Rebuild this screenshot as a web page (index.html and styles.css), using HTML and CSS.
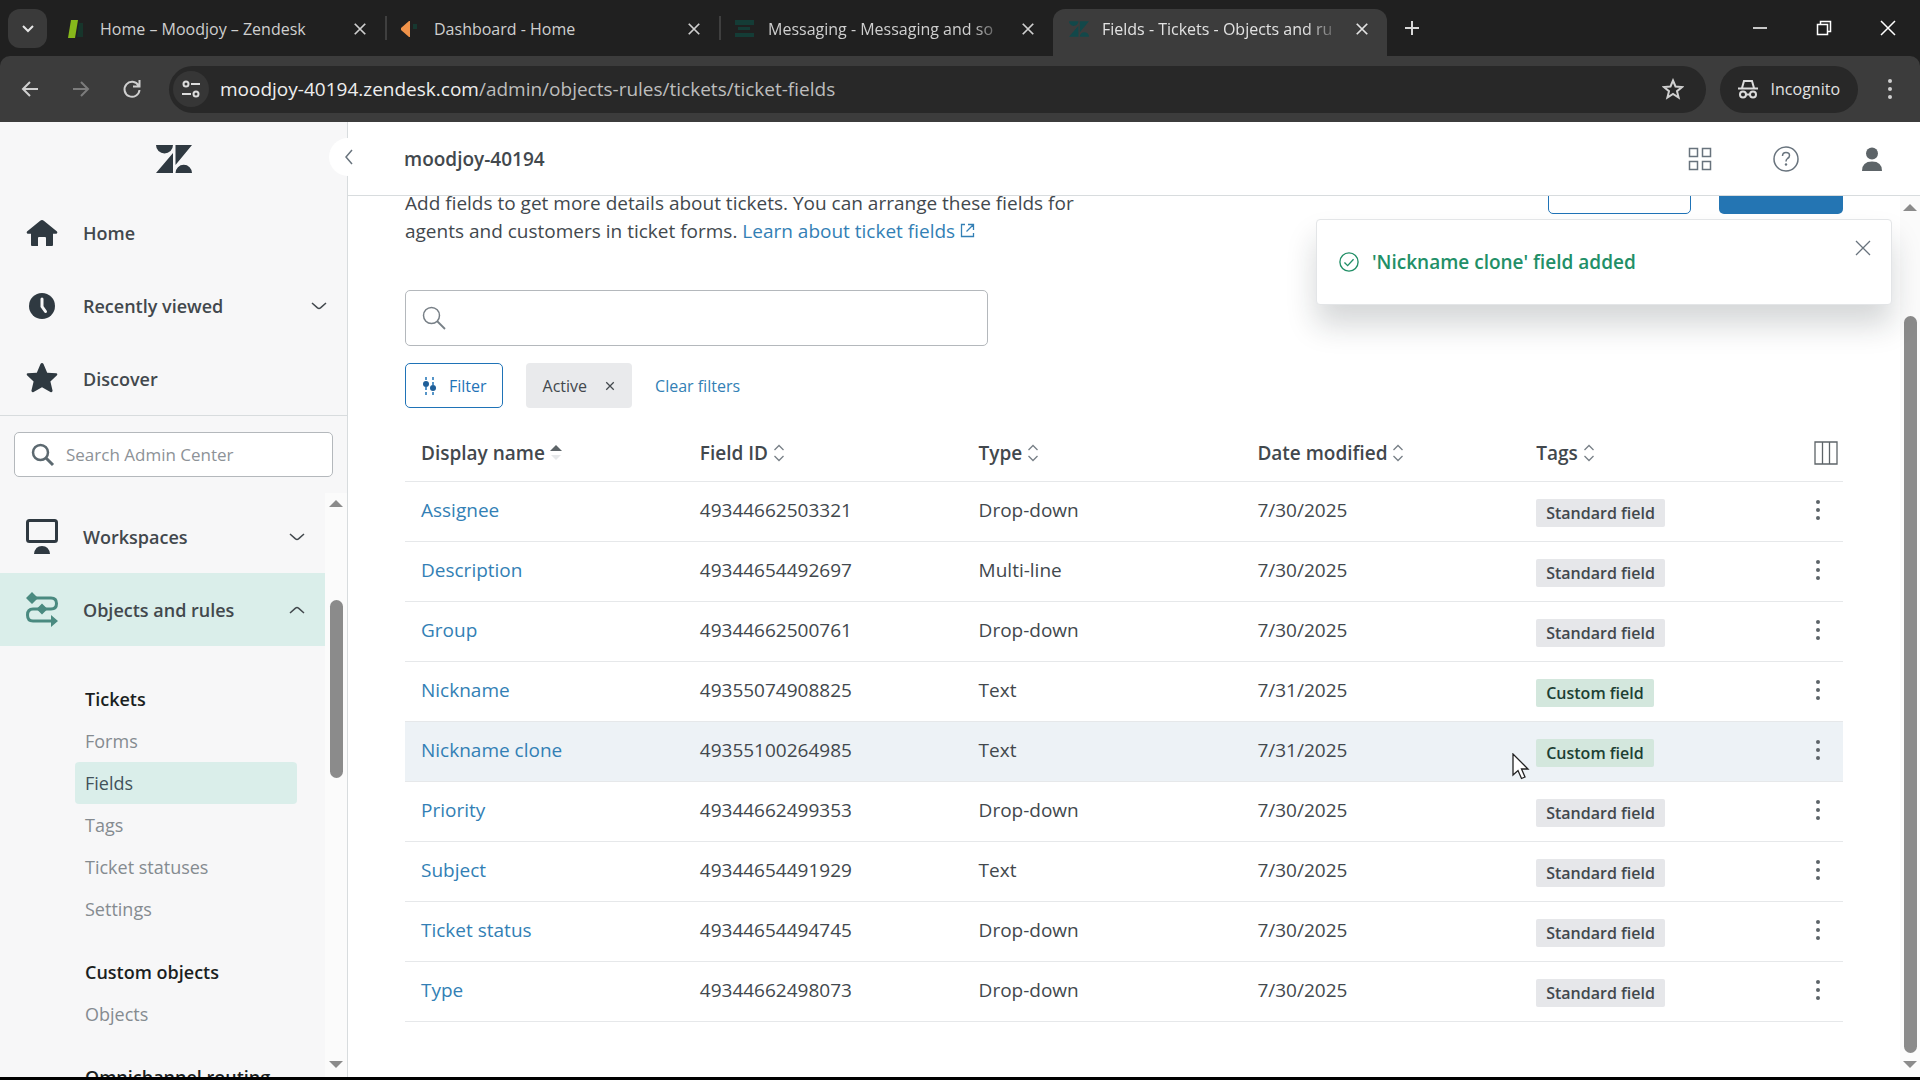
FILE: index.html
```html
<!DOCTYPE html>
<html lang="en">

<head>
  <meta charset="UTF-8">
  <meta name="viewport" content="width=device-width, initial-scale=1.0">
  <title>Fields - Tickets - Objects and rules</title>
  <link rel="stylesheet" href="styles.css">
</head>

<body>
  <!-- shared icons -->
  <svg class="sprite" aria-hidden="true">
    <symbol id="i-x" viewBox="0 0 16 16"><path d="M2 2l12 12M14 2L2 14" fill="none" stroke="currentColor" stroke-width="2"/></symbol>
    <symbol id="i-thin-x" viewBox="0 0 16 16"><path d="M1 1l14 14M15 1L1 15" fill="none" stroke="currentColor" stroke-width="1.3"/></symbol>
    <symbol id="i-down" viewBox="0 0 16 10"><path d="M1 2l5.500 4.800q1.500 1.200 3 0L15 2" fill="none" stroke="currentColor" stroke-width="1.500"/></symbol>
    <symbol id="i-dots" viewBox="0 0 6 22"><circle cx="3" cy="3" r="2"/><circle cx="3" cy="11" r="2"/><circle cx="3" cy="19" r="2"/></symbol>
    <symbol id="i-sort" viewBox="0 0 12 18"><path d="M1.500 6L6 1.500 10.500 6M1.500 12L6 16.500 10.500 12" fill="none" stroke="currentColor" stroke-width="1.300"/></symbol>
    <symbol id="i-zen" viewBox="0 0 36 28"><path d="M0 0h17a8.500 8.500 0 0 1-17 0zM17 8v20H0zM19.500 0H36L19.500 20zM19.500 28a8.250 8.250 0 0 1 16.500 0z"/></symbol>
  </svg>

  <header class="browser">
    <div class="tabs">
      <button class="tab-menu" aria-label="Search tabs"><svg width="14" height="9"><path d="M2 2l5 5 5-5" fill="none" stroke="#e6e6e6" stroke-width="2"/></svg></button>
      <div class="tab">
        <svg class="favicon" viewBox="0 0 20 20"><path d="M4 1h7L8 19H1z" fill="#86b81b"/><path d="M12 4h4v14h-6z" fill="#17352b"/></svg>
        <span class="tab-title">Home – Moodjoy – Zendesk</span>
        <button class="tab-close" aria-label="Close tab"><svg><use href="#i-x"/></svg></button>
      </div>
      <div class="tab divided">
        <svg class="favicon" viewBox="0 0 20 20"><path d="M8 2h1v16H8L0 11V9z" fill="#f0934a"/><path d="M12 5h4v5h-4z" fill="#173830"/></svg>
        <span class="tab-title">Dashboard - Home</span>
        <button class="tab-close" aria-label="Close tab"><svg><use href="#i-x"/></svg></button>
      </div>
      <div class="tab divided">
        <svg class="favicon" viewBox="0 0 20 20"><path d="M0 1h19v5H0zM3 8h12v3H3zM0 14h19v4H0z" fill="#143c36"/></svg>
        <span class="tab-title fade">Messaging - Messaging and so</span>
        <button class="tab-close" aria-label="Close tab"><svg><use href="#i-x"/></svg></button>
      </div>
      <div class="tab active">
        <svg class="favicon teal"><use href="#i-zen"/></svg>
        <span class="tab-title fade">Fields - Tickets - Objects and ru</span>
        <button class="tab-close" aria-label="Close tab"><svg><use href="#i-x"/></svg></button>
      </div>
      <button class="new-tab" aria-label="New tab"><svg width="16" height="16"><path d="M8 1v14M1 8h14" stroke="#d8d8d8" stroke-width="2"/></svg></button>
      <div class="win-btns">
        <button aria-label="Minimize"><svg width="16" height="16"><path d="M1 8h14" stroke="#fff" stroke-width="1.500"/></svg></button>
        <button aria-label="Restore"><svg width="16" height="16"><path d="M1.500 4.500h10v10h-10zM4.500 4V1.500h10v10H12" fill="none" stroke="#fff" stroke-width="1.500"/></svg></button>
        <button aria-label="Close"><svg width="16" height="16"><path d="M1 1l14 14M15 1L1 15" stroke="#fff" stroke-width="1.500"/></svg></button>
      </div>
    </div>

    <div class="toolbar">
      <div class="nav-btns">
        <button aria-label="Back"><svg width="20" height="20"><path d="M18 10H3M10 3l-7 7 7 7" fill="none" stroke="#d0d0d0" stroke-width="2"/></svg></button>
        <button aria-label="Forward"><svg width="20" height="20"><path d="M2 10h15M10 3l7 7-7 7" fill="none" stroke="#7c7c7c" stroke-width="2"/></svg></button>
        <button aria-label="Reload"><svg width="20" height="20"><path d="M16.500 6.500a7.500 7.500 0 1 0 1 4.500M17.500 1v6.500H11" fill="none" stroke="#d0d0d0" stroke-width="2"/></svg></button>
      </div>
      <div class="address">
        <button class="site-info" aria-label="Site information"><svg width="20" height="18"><g fill="none" stroke="#dcdcdc" stroke-width="2"><circle cx="5" cy="4" r="2.500"/><path d="M10 4h9M1 14h9"/><circle cx="15" cy="14" r="2.500"/></g></svg></button>
        <div class="url">moodjoy-40194.zendesk.com<span>/admin/objects-rules/tickets/ticket-fields</span></div>
        <button class="bookmark" aria-label="Bookmark"><svg width="22" height="22" viewBox="0 0 22 22"><path d="M11 2.500l2.500 6 6.500.500-5 4.200 1.600 6.300-5.600-3.500-5.600 3.500L7 13.200 2 9l6.500-.500z" fill="none" stroke="#d0d0d0" stroke-width="2"/></svg></button>
      </div>
      <div class="incognito">
        <svg width="20" height="20" fill="none" stroke="#dcdcdc" stroke-width="2"><path d="M0 9.500h20M4 9l2-7h8l2 7M8 15.500h4"/><circle cx="5" cy="15.500" r="3"/><circle cx="15" cy="15.500" r="3"/></svg>
        Incognito
      </div>
      <button class="menu" aria-label="Menu"><svg><use href="#i-dots"/></svg></button>
    </div>
  </header>

  <div class="app">
    <aside class="sidebar">
      <div class="brand"><svg width="36" height="28"><use href="#i-zen"/></svg></div>
      <button class="collapse" aria-label="Collapse navigation"><svg width="9" height="16"><path d="M8 1L2 8l6 7" fill="none" stroke="#68737d" stroke-width="1.500"/></svg></button>
      <nav class="top-nav">
        <a class="nav-item" href="#">
          <svg viewBox="0 0 32 32"><path d="M16 3q1 0 1.800.700L31 14.500q1 1.500-.500 2.200H27V28q0 1-1 1h-6v-8q0-1-1-1h-6q-1 0-1 1v8H6q-1 0-1-1V16.700H1.500Q0 16 1 14.500L14.200 3.700Q15 3 16 3z"/></svg>
          Home
        </a>
        <a class="nav-item" href="#">
          <svg viewBox="0 0 32 32"><circle cx="16" cy="16" r="13"/><path d="M16 9v7.500l3.500 5" fill="none" stroke="#f7f7f8" stroke-width="3" stroke-linecap="round"/></svg>
          Recently viewed
          <svg class="chev"><use href="#i-down"/></svg>
        </a>
        <a class="nav-item" href="#">
          <svg viewBox="0 0 32 32"><path d="M16 0q1 0 1.500 1l3.700 8.700 9.300.600q1.500.700.500 2l-6.600 6.200 2.200 9.300q-.300 2-2.200 1.200L16 24.200 7.600 29q-1.900.800-2.200-1.200l2.200-9.300L1 12.300q-1-1.300.500-2l9.300-.600L14.500 1Q15 0 16 0z"/></svg>
          Discover
        </a>
      </nav>
      <div class="side-search">
        <label class="side-box">
          <svg width="24" height="24"><circle cx="9.500" cy="9.500" r="7.500" fill="none" stroke="#5c6970" stroke-width="2.500"/><path d="M15 15l7 7" stroke="#5c6970" stroke-width="3"/></svg>
          <input type="text" placeholder="Search Admin Center" aria-label="Search Admin Center">
        </label>
      </div>
      <div class="side-scroll">
        <nav class="sections">
          <a class="nav-item" href="#">
            <svg viewBox="0 0 32 36"><rect x="1.500" y="1.500" width="29" height="21" rx="2" fill="none" stroke="#2f3941" stroke-width="3"/><path d="M8 35q1-8 8-8t8 8z"/></svg>
            Workspaces
            <svg class="chev"><use href="#i-down"/></svg>
          </a>
          <a class="nav-item selected" href="#">
            <svg viewBox="0 0 32 36"><path d="M6 6h19q5.500 0 5.500 5.500T25 17H7q-5.500 0-5.500 6T7 29h19" fill="none" stroke="#4a8a80" stroke-width="3"/><path d="M6 0l6 6-6 6-6-6zM16 11.500l5.500 5.500-5.500 5.500-5.500-5.500zM25 23l7 6-7 6z" fill="#4a8a80"/></svg>
            Objects and rules
            <svg class="chev up"><use href="#i-down"/></svg>
          </a>
          <div class="group">
            <h2>Tickets</h2>
            <a href="#">Forms</a>
            <a class="current" href="#">Fields</a>
            <a href="#">Tags</a>
            <a href="#">Ticket statuses</a>
            <a href="#">Settings</a>
          </div>
          <div class="group">
            <h2>Custom objects</h2>
            <a href="#">Objects</a>
          </div>
          <div class="group">
            <h2>Omnichannel routing</h2>
          </div>
        </nav>
        <div class="scrollbar side-bar">
          <svg><path d="M0 8l7-7 7 7z"/></svg>
          <i class="before"></i><i class="thumb"></i><i class="after"></i>
          <svg><path d="M0 1l7 7 7-7z"/></svg>
        </div>
      </div>
    </aside>

    <section class="main">
      <header class="topbar">
        <strong>moodjoy-40194</strong>
        <div class="topbar-icons">
          <button aria-label="Products"><svg width="24" height="24"><path d="M1.500 1.500h8v8h-8zM14.500 1.500h8v8h-8zM1.500 14.500h8v8h-8zM14.500 14.500h8v8h-8z" fill="none" stroke="#68737d" stroke-width="1.500"/></svg></button>
          <button aria-label="Help"><svg width="26" height="26"><circle cx="13" cy="13" r="12" fill="none" stroke="#68737d" stroke-width="1.500"/><path d="M9.500 10q0-3.500 3.500-3.500t3.500 3q0 1.800-2 3-1.500 1-1.500 3" fill="none" stroke="#68737d" stroke-width="1.500"/><circle cx="13" cy="18.500" r="1.200" fill="#68737d"/></svg></button>
          <button aria-label="Profile"><svg width="24" height="24" fill="#5d6468"><circle cx="12" cy="6.500" r="6"/><path d="M2 24q0-9.500 10-9.500T22 24z"/></svg></button>
        </div>
      </header>

      <div class="scroll-area">
        <main class="content">
          <div class="page-head">
            <p>Add fields to get more details about tickets. You can arrange these fields for agents and customers in ticket forms. <a href="#">Learn about ticket fields <svg width="15" height="15"><path d="M5 1.500H1.500v12h12V10M8 1.500h5.500V7M13.500 1.500L6.500 8.500" fill="none" stroke="currentColor" stroke-width="1.300"/></svg></a></p>
            <div class="head-btns">
              <button class="outline" aria-label="Actions"></button>
              <button class="primary" aria-label="Add field"></button>
            </div>
          </div>

          <label class="field-search">
            <svg width="24" height="24"><circle cx="9.500" cy="9.500" r="8" fill="none" stroke="#777f86" stroke-width="1.500"/><path d="M15 15l8 8" stroke="#777f86" stroke-width="1.800"/></svg>
            <input type="text" aria-label="Search fields">
          </label>

          <div class="filters">
            <button class="filter"><svg width="15" height="18"><path d="M4 0v18M11 0v18" stroke="#1f73b7" stroke-width="1.500" stroke-dasharray="3 2"/><circle cx="4" cy="7" r="3" fill="#1f5f99"/><circle cx="11" cy="11" r="3" fill="#1f5f99"/></svg>Filter</button>
            <span class="chip">Active <button aria-label="Remove Active"><svg width="10" height="10"><use href="#i-x"/></svg></button></span>
            <a href="#">Clear filters</a>
          </div>

          <table class="fields">
            <colgroup><col><col><col><col><col><col class="col-menu"></colgroup>
            <thead>
              <tr>
                <th>Display name <svg width="12" height="18"><path d="M0 7l6-6 6 6z" fill="#5d6468"/><path d="M1 11h10l-5 5z" fill="#e6e8ea"/></svg></th>
                <th>Field ID <svg><use href="#i-sort"/></svg></th>
                <th>Type <svg><use href="#i-sort"/></svg></th>
                <th>Date modified <svg><use href="#i-sort"/></svg></th>
                <th>Tags <svg><use href="#i-sort"/></svg></th>
                <th><button aria-label="Columns"><svg class="columns" viewBox="0 0 24 24"><path d="M1 1h22v22H1zM8.500 1v22M15.500 1v22" fill="none" stroke="#5d6468" stroke-width="1.300"/></svg></button></th>
              </tr>
            </thead>
            <tbody>
              <tr><td><a href="#">Assignee</a></td><td>49344662503321</td><td>Drop-down</td><td>7/30/2025</td><td><span class="tag">Standard field</span></td><td><button aria-label="Assignee menu"><svg><use href="#i-dots"/></svg></button></td></tr>
              <tr><td><a href="#">Description</a></td><td>49344654492697</td><td>Multi-line</td><td>7/30/2025</td><td><span class="tag">Standard field</span></td><td><button aria-label="Description menu"><svg><use href="#i-dots"/></svg></button></td></tr>
              <tr><td><a href="#">Group</a></td><td>49344662500761</td><td>Drop-down</td><td>7/30/2025</td><td><span class="tag">Standard field</span></td><td><button aria-label="Group menu"><svg><use href="#i-dots"/></svg></button></td></tr>
              <tr><td><a href="#">Nickname</a></td><td>49355074908825</td><td>Text</td><td>7/31/2025</td><td><span class="tag custom">Custom field</span></td><td><button aria-label="Nickname menu"><svg><use href="#i-dots"/></svg></button></td></tr>
              <tr class="hovered"><td><a href="#">Nickname clone</a></td><td>49355100264985</td><td>Text</td><td>7/31/2025</td><td><span class="tag custom">Custom field</span></td><td><button aria-label="Nickname clone menu"><svg><use href="#i-dots"/></svg></button></td></tr>
              <tr><td><a href="#">Priority</a></td><td>49344662499353</td><td>Drop-down</td><td>7/30/2025</td><td><span class="tag">Standard field</span></td><td><button aria-label="Priority menu"><svg><use href="#i-dots"/></svg></button></td></tr>
              <tr><td><a href="#">Subject</a></td><td>49344654491929</td><td>Text</td><td>7/30/2025</td><td><span class="tag">Standard field</span></td><td><button aria-label="Subject menu"><svg><use href="#i-dots"/></svg></button></td></tr>
              <tr><td><a href="#">Ticket status</a></td><td>49344654494745</td><td>Drop-down</td><td>7/30/2025</td><td><span class="tag">Standard field</span></td><td><button aria-label="Ticket status menu"><svg><use href="#i-dots"/></svg></button></td></tr>
              <tr><td><a href="#">Type</a></td><td>49344662498073</td><td>Drop-down</td><td>7/30/2025</td><td><span class="tag">Standard field</span></td><td><button aria-label="Type menu"><svg><use href="#i-dots"/></svg></button></td></tr>
            </tbody>
          </table>
        </main>

        <div class="scrollbar main-bar">
          <svg><path d="M0 8l7-7 7 7z"/></svg>
          <i class="before"></i><i class="thumb"></i><i class="after"></i>
          <svg><path d="M0 1l7 7 7-7z"/></svg>
        </div>

        <div class="toast" role="status">
          <svg width="20" height="22" fill="none" stroke="#228f67" stroke-width="1.500" viewBox="0 0 22 22"><circle cx="11" cy="11" r="10"/><path d="M6 11.500l3.500 3.500L16 8"/></svg>
          <span>'Nickname clone' field added</span>
          <button aria-label="Close"><svg width="16" height="16"><use href="#i-thin-x"/></svg></button>
        </div>
      </div>
    </section>
  </div>

  <svg class="cursor" width="18" height="28" aria-hidden="true"><path d="M1 1v21l5-4.500 3.500 8 3.500-1.500-3.500-8H16z" fill="#fff" stroke="#222" stroke-width="1.300"/></svg>
</body>

</html>
```
FILE: styles.css
```css
* {
  box-sizing: border-box;
}

body {
  margin: 0;
  height: 100vh;
  display: flex;
  flex-direction: column;
  overflow: hidden;
  border-bottom: 3px solid #000;
  font-family: "Open Sans", "Noto Sans", sans-serif;
  font-size: 19px;
  color: #42484d;
  background: #fff;
}

button {
  display: flex;
  align-items: center;
  justify-content: center;
  padding: 0;
  border: none;
  background: none;
  font: inherit;
  color: inherit;
}

a {
  color: #337fb5;
  text-decoration: none;
}

input {
  flex: 1;
  min-width: 0;
  border: none;
  outline: none;
  background: none;
  font: inherit;
  color: inherit;
}

svg {
  flex: none;
}

.sprite {
  position: absolute;
  width: 0;
  height: 0;
}

/* browser */
.browser {
  flex: none;
  background: #202020;
  color: #cfcfcf;
  font-size: 16px;
}

.tabs {
  display: flex;
  align-items: center;
  height: 56px;
  padding-left: 8px;
}

.tab-menu {
  width: 39px;
  height: 39px;
  margin-right: 4px;
  border-radius: 12px;
  background: #3a3a3a;
}

.tab {
  position: relative;
  display: flex;
  align-items: center;
  flex: 0 1 334px;
  min-width: 0;
  gap: 13px;
  height: 47px;
  margin-top: 9px;
  padding: 0 18px 8px 16px;
}

.tab.divided::before {
  content: "";
  position: absolute;
  left: 0;
  top: 7px;
  width: 2px;
  height: 24px;
  background: #3f3f3f;
}

.tab.active {
  border-radius: 12px 12px 0 0;
  background: #3c3c3c;
  color: #e2e2e2;
}

.favicon {
  width: 20px;
  height: 20px;
}

.teal {
  fill: #12484a;
}

.tab-title {
  flex: 1;
  overflow: hidden;
  white-space: nowrap;
}

.fade {
  -webkit-mask-image: linear-gradient(to right, #000 85%, transparent);
  mask-image: linear-gradient(to right, #000 85%, transparent);
}

.tab-close svg {
  width: 14px;
  height: 14px;
}

.new-tab {
  width: 50px;
}

.win-btns {
  display: flex;
  margin-left: auto;
}

.win-btns button {
  width: 64px;
}

.toolbar {
  display: flex;
  align-items: center;
  height: 66px;
  padding-right: 13px;
  border-radius: 10px 10px 0 0;
  background: #3c3c3c;
}

.nav-btns {
  display: flex;
  gap: 10px;
  padding: 0 17px 0 9px;
}

.nav-btns button {
  width: 41px;
  height: 41px;
}

.address {
  display: flex;
  align-items: center;
  flex: 1;
  height: 47px;
  padding: 0 22px 0 4px;
  border-radius: 24px;
  background: #282828;
}

.site-info {
  width: 36px;
  height: 36px;
  margin-right: 11px;
  border-radius: 50%;
  background: #363636;
}

.url {
  flex: 1;
  font-size: 19px;
  color: #eee;
}

.url span {
  color: #bdbdbd;
}

.incognito {
  display: flex;
  align-items: center;
  gap: 13px;
  height: 47px;
  margin: 0 14px;
  padding: 0 18px;
  border-radius: 24px;
  background: #282828;
  color: #e2e2e2;
}

.menu {
  width: 35px;
}

.menu svg {
  width: 6px;
  height: 22px;
  fill: #cfcfcf;
}

/* app */
.app {
  display: flex;
  flex: 1;
  min-height: 0;
}

.sidebar {
  position: relative;
  display: flex;
  flex-direction: column;
  flex: none;
  width: 348px;
  border-right: 1px solid #d8dcde;
  background: #f7f7f8;
}

.brand {
  display: flex;
  align-items: center;
  justify-content: center;
  height: 74px;
  fill: #2f3941;
}

.collapse {
  position: absolute;
  z-index: 1;
  top: 16px;
  right: -20px;
  width: 38px;
  height: 38px;
  border-radius: 50%;
  background: #fff;
}

.nav-item {
  display: flex;
  align-items: center;
  gap: 25px;
  height: 73px;
  padding: 0 20px 0 26px;
  font-size: 18px;
  font-weight: 600;
  color: #42484d;
}

.nav-item > svg {
  width: 32px;
  height: 36px;
  fill: #2f3941;
}

.nav-item .chev {
  width: 16px;
  height: 10px;
  margin-left: auto;
}

.nav-item .up {
  transform: rotate(180deg);
}

.selected {
  background: #daeeea;
}

.side-search {
  padding: 16px 14px;
  border-top: 1px solid #d8dcde;
}

.side-box {
  display: flex;
  align-items: center;
  gap: 9px;
  height: 45px;
  padding: 0 16px;
  border: 1px solid #b4b8bc;
  border-radius: 5px;
  background: #fff;
  font-size: 17px;
}

.side-box input::placeholder {
  color: #8d9297;
}

.side-scroll {
  display: flex;
  flex: 1;
  min-height: 0;
}

.sections {
  flex: 1;
  overflow: hidden;
  padding-top: 7px;
}

.group {
  margin: 0 28px 22px 75px;
  font-size: 18px;
}

.selected + .group {
  margin-top: 33px;
}

.group h2 {
  margin: 0;
  padding-left: 10px;
  font-size: 18px;
  font-weight: 600;
  line-height: 41px;
  color: #1b1f22;
}

.group a {
  display: block;
  padding-left: 10px;
  line-height: 42px;
  color: #858b90;
}

.group .current {
  border-radius: 4px;
  background: #daeeea;
  color: #42525a;
}

.scrollbar {
  display: flex;
  flex-direction: column;
  align-items: center;
  flex: none;
  width: 22px;
  padding: 6px 0 8px;
  background: #fbfbfb;
}

.scrollbar svg {
  width: 14px;
  height: 9px;
  fill: #8b8b8b;
}

.thumb {
  width: 13px;
  border-radius: 7px;
  background: #8b8b8b;
}

.side-bar .before {
  flex: 92;
}

.side-bar .thumb {
  flex: 177;
}

.side-bar .after {
  flex: 282;
}

.main {
  display: flex;
  flex-direction: column;
  flex: 1;
  min-width: 0;
}

.topbar {
  display: flex;
  align-items: center;
  justify-content: space-between;
  flex: none;
  height: 74px;
  padding: 0 36px 0 56px;
  border-bottom: 1px solid #d8dcde;
}

.topbar strong {
  font-weight: 600;
}

.topbar-icons {
  display: flex;
  gap: 61px;
}

.scroll-area {
  position: relative;
  display: flex;
  flex: 1;
  min-height: 0;
  overflow: hidden;
}

.main-bar {
  width: 20px;
  padding-top: 7px;
}

.main-bar .before {
  flex: 104;
}

.main-bar .thumb {
  flex: 736;
}

.main-bar .after {
  flex: 7;
}

.content {
  flex: 1;
  min-width: 0;
  padding: 0 57px;
}

/* the page is scrolled down, so its head is cut by the top bar */
.page-head {
  display: flex;
  justify-content: space-between;
  margin: -31px 0 45px;
}

.page-head p {
  max-width: 690px;
  margin: 0;
  padding-top: 24px;
  line-height: 28px;
}

.head-btns {
  display: flex;
  gap: 28px;
}

.head-btns button {
  height: 49px;
  border-radius: 5px;
}

.head-btns .outline {
  width: 143px;
  border: 1px solid #1f73b7;
}

.head-btns .primary {
  width: 124px;
  background: #2475b3;
}

.field-search {
  display: flex;
  align-items: center;
  width: 583px;
  height: 56px;
  padding: 0 16px;
  border: 1px solid #b4b8bc;
  border-radius: 5px;
}

.filters {
  display: flex;
  align-items: center;
  gap: 23px;
  height: 45px;
  margin: 17px 0;
  font-size: 16px;
}

.filter {
  gap: 12px;
  height: 45px;
  padding: 0 15px 0 16px;
  border: 1px solid #1f73b7;
  border-radius: 5px;
  color: #1f73b7;
}

.chip {
  display: flex;
  align-items: center;
  gap: 18px;
  height: 45px;
  padding: 0 17px;
  border-radius: 4px;
  background: #e9eaec;
  font-weight: 500;
}

.fields {
  width: 100%;
  table-layout: fixed;
  border-collapse: collapse;
}

.col-menu {
  width: 44px;
}

.fields tr {
  height: 60px;
  border-bottom: 1px solid #e6e8ea;
}

.fields thead tr {
  height: 56px;
}

.fields th,
.fields td {
  padding: 0 0 0 16px;
  text-align: left;
  white-space: nowrap;
}

.fields td {
  padding-bottom: 2px;
}

.fields th {
  font-weight: 600;
}

.fields th svg {
  width: 12px;
  height: 18px;
  vertical-align: -2px;
  color: #777f86;
}

.fields th:last-child,
.fields td:last-child {
  padding-left: 11px;
}

.fields th:last-child {
  padding-left: 15px;
}

.fields th .columns {
  width: 24px;
  height: 24px;
}

.fields td button {
  width: 16px;
}

.fields td button svg {
  width: 6px;
  height: 22px;
  fill: #5d6468;
}

.hovered {
  background: #edf2f6;
}

.tag {
  display: inline-block;
  height: 28px;
  margin-top: 6px;
  padding: 0 10px;
  border-radius: 2px;
  background: #e6e7ea;
  font-size: 16px;
  font-weight: 600;
  line-height: 28px;
}

.tag.custom {
  background: #d3e7dd;
  color: #1d3f33;
}

.toast {
  position: absolute;
  top: 23px;
  right: 28px;
  display: flex;
  align-items: center;
  gap: 13px;
  width: 576px;
  height: 86px;
  padding: 0 20px 0 22px;
  border: 1px solid #e3e5e7;
  border-radius: 4px;
  background: #fff;
  box-shadow: 0 20px 30px rgba(23, 32, 40, 0.18);
  font-weight: 600;
  color: #228f67;
}

.toast button {
  align-self: flex-start;
  margin: 20px 0 0 auto;
  color: #68737d;
}

.cursor {
  position: absolute;
  left: 1512px;
  top: 753px;
}
```
